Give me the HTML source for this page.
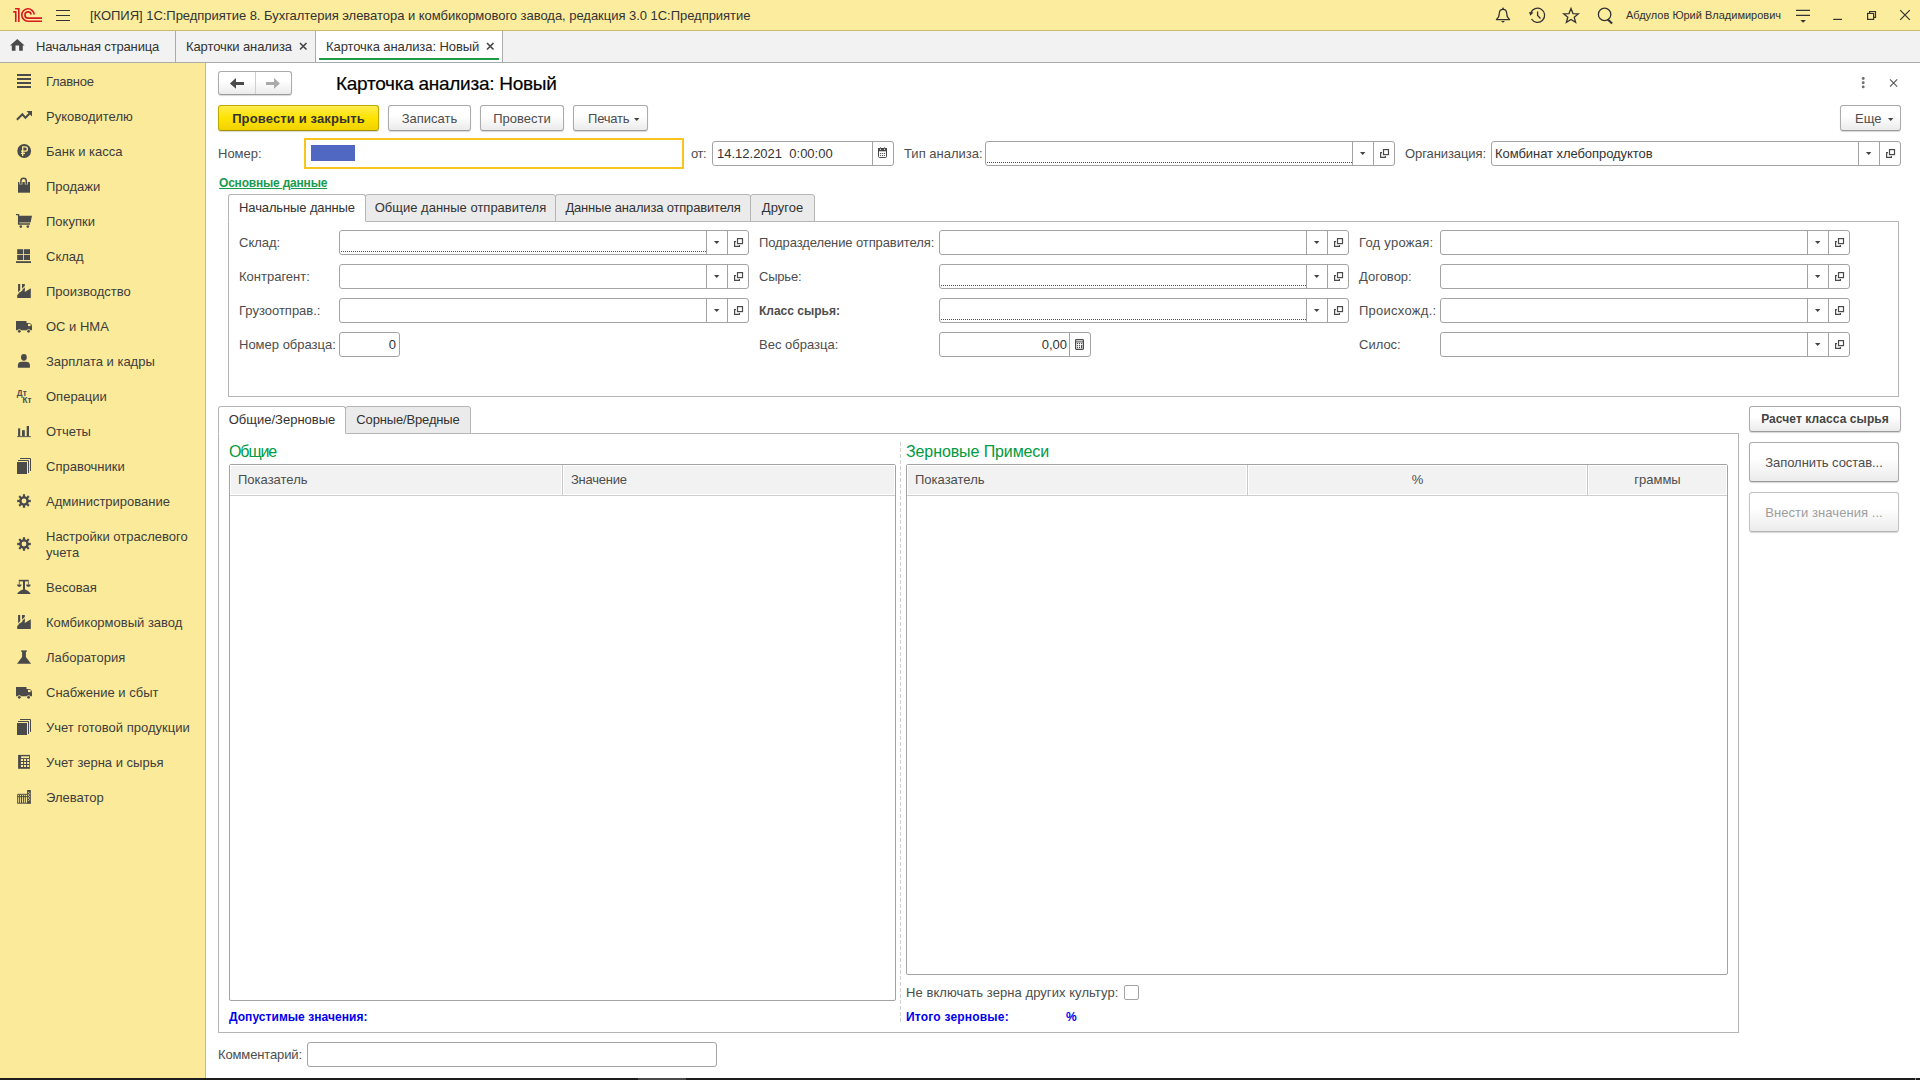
<!DOCTYPE html>
<html><head><meta charset="utf-8"><style>
*{box-sizing:border-box;margin:0;padding:0}
html,body{width:1920px;height:1080px;overflow:hidden}
body{position:relative;font-family:"Liberation Sans",sans-serif;font-size:13px;color:#4d4d4d;background:#fff}
.a{position:absolute}
.t{position:absolute;line-height:15px;white-space:nowrap}
.b12{font-size:12px;font-weight:bold;line-height:14px}
.sep{position:absolute;top:0;width:1px;height:31px;background:#C9C9C9}
.btn{position:absolute;height:26px;border:1px solid #ABABAB;border-bottom-color:#9A9A9A;border-radius:3px;background:linear-gradient(#FFFFFF 0%,#FFFFFF 40%,#EBEBEB 100%);box-shadow:0 1px 1px rgba(0,0,0,.16);color:#4d4d4d;text-align:center;line-height:24px;white-space:nowrap;padding-top:1px}
.fld{position:absolute;height:25px;border:1px solid #A3A3A3;border-radius:3px;background:#fff}
.dd{position:absolute;top:0;width:1px;height:23px;background:#A3A3A3}
.req{position:absolute;height:1px;background-image:linear-gradient(to right,#FF0000 50%,transparent 50%);background-size:2px 1px}
.lbl{position:absolute;line-height:15px;white-space:nowrap;color:#4d4d4d}
.ico{position:absolute;fill:#4A4A4A}
</style></head><body>
<div class="a" style="left:0;top:0;width:1920px;height:30px;background:#FBEC9E"></div>
<div class="a" style="left:0;top:30px;width:1920px;height:1px;background:#CDBB6A"></div>
<svg class="a" style="left:8px;top:4px" width="40" height="22" viewBox="0 0 40 22"><g fill="none" stroke="#D71920" stroke-width="1.6">
<path d="M5.2 7.9 H7.76 V18"/><path d="M7.1 4.8 H10.83 V18"/>
<path d="M26.18 10.46 A6.2 6.2 0 1 0 20 17.2 H34"/><path d="M23.07 10.57 A3.1 3.1 0 1 0 20 14.1 H34"/></g></svg>
<div class="a" style="left:56px;top:10px;width:14px;height:1.3px;background:#333;box-shadow:0 5px 0 #333,0 10px 0 #333"></div>
<div class="t" style="left:90px;top:8px;color:#333;letter-spacing:-0.033px">[КОПИЯ] 1С:Предприятие 8. Бухгалтерия элеватора и комбикормового завода, редакция 3.0 1С:Предприятие</div>
<svg class="a" style="left:1488px;top:2px" width="140" height="28" viewBox="0 0 140 28"><g fill="none" stroke="#333" stroke-width="1.3">
<path d="M8.4 17.6 L10.4 15.2 Q11.1 13.8 11.3 11.2 Q11.6 7.4 15 7.4 Q18.4 7.4 18.7 11.2 Q18.9 13.8 19.6 15.2 L21.6 17.6 Z" stroke-linejoin="round"/>
<path d="M43.5 17 A7.1 7.1 0 1 0 42.8 11"/><path d="M49.6 9.5 V13.5 L52.5 16.5"/>
<path d="M83 6.5 L85 11.6 L90.3 11.9 L86.2 15.2 L87.6 20.3 L83 17.4 L78.4 20.3 L79.8 15.2 L75.7 11.9 L81 11.6 Z"/>
<circle cx="116.6" cy="12.4" r="6.2"/></g>
<g fill="#333"><path d="M13 19 H17 L15 20.8 Z"/><circle cx="15" cy="6.3" r="0.9"/><path d="M41 10 L45.5 10.5 L42.3 13.8 Z"/><path d="M120.5 16.8 L124.8 20.8 L123.4 22.2 L119.1 18.2 Z"/></g></svg>
<div class="t" style="left:1626px;top:9px;font-size:11px;line-height:12px;color:#333">Абдулов Юрий Владимирович</div>
<svg class="a" style="left:1780px;top:2px" width="140" height="28" viewBox="0 0 140 28"><g fill="none" stroke="#333" stroke-width="1.2">
<path d="M16 8.4 H30 M16 13.3 H30"/><path d="M53.2 17.4 H62"/>
<rect x="87.6" y="11.4" width="6" height="6"/><path d="M89.6 11.4 V9.5 H95.5 V15.4 H93.6"/>
<path d="M120.2 8.2 L129.8 17.8 M129.8 8.2 L120.2 17.8"/></g>
<path d="M20.4 17.9 H25.9 L23.15 20.8 Z" fill="#333"/></svg>
<div class="a" style="left:0;top:31px;width:1920px;height:31px;background:#F2F2F2"></div>
<div class="a" style="left:0;top:62px;width:1920px;height:1px;background:#ABABAB"></div>
<svg class="a" style="left:10px;top:39px" width="15" height="12" viewBox="0 0 15 12"><path d="M7.3 0 L14.6 6.6 H12.8 V11.7 H9.1 V6.6 H5.5 V11.7 H1.8 V6.6 H0 Z" fill="#4A4A4A"/></svg>
<div class="t" style="left:36px;top:39px;color:#333;letter-spacing:-0.147px">Начальная страница</div>
<div class="a" style="left:175px;top:31px;width:1px;height:31px;background:#ABABAB"></div>
<div class="t" style="left:186px;top:39px;color:#333;letter-spacing:-0.097px">Карточки анализа</div>
<svg class="a" style="left:299px;top:42px" width="9" height="9" viewBox="0 0 9 9"><path d="M1 1 L7.5 7.5 M7.5 1 L1 7.5" stroke="#444" stroke-width="1.6"/></svg>
<div class="a" style="left:316px;top:31px;width:186px;height:31px;background:#FFFFFF"></div>
<div class="a" style="left:315px;top:31px;width:1px;height:31px;background:#ABABAB"></div>
<div class="t" style="left:326px;top:39px;color:#333;letter-spacing:-0.086px">Карточка анализа: Новый</div>
<svg class="a" style="left:486px;top:42px" width="9" height="9" viewBox="0 0 9 9"><path d="M1 1 L7.5 7.5 M7.5 1 L1 7.5" stroke="#444" stroke-width="1.6"/></svg>
<div class="a" style="left:319px;top:58px;width:180px;height:2px;background:#1E9B47"></div>
<div class="a" style="left:502px;top:31px;width:1px;height:31px;background:#ABABAB"></div>
<div class="a" style="left:0;top:63px;width:205px;height:1015px;background:#FBEA9A"></div>
<div class="a" style="left:205px;top:63px;width:1px;height:1015px;background:#C9BB80"></div>
<div class="t" style="left:46px;top:74px;color:#3d3d3d;letter-spacing:-0.292px">Главное</div>
<div class="t" style="left:46px;top:109px;color:#3d3d3d">Руководителю</div>
<div class="t" style="left:46px;top:144px;color:#3d3d3d">Банк и касса</div>
<div class="t" style="left:46px;top:179px;color:#3d3d3d">Продажи</div>
<div class="t" style="left:46px;top:214px;color:#3d3d3d">Покупки</div>
<div class="t" style="left:46px;top:249px;color:#3d3d3d">Склад</div>
<div class="t" style="left:46px;top:284px;color:#3d3d3d">Производство</div>
<div class="t" style="left:46px;top:319px;color:#3d3d3d">ОС и НМА</div>
<div class="t" style="left:46px;top:354px;color:#3d3d3d">Зарплата и кадры</div>
<div class="t" style="left:46px;top:389px;color:#3d3d3d">Операции</div>
<div class="t" style="left:46px;top:424px;color:#3d3d3d">Отчеты</div>
<div class="t" style="left:46px;top:459px;color:#3d3d3d">Справочники</div>
<div class="t" style="left:46px;top:494px;color:#3d3d3d">Администрирование</div>
<div class="t" style="left:46px;top:529px;color:#3d3d3d;line-height:16px">Настройки отраслевого<br>учета</div>
<div class="t" style="left:46px;top:580px;color:#3d3d3d">Весовая</div>
<div class="t" style="left:46px;top:615px;color:#3d3d3d">Комбикормовый завод</div>
<div class="t" style="left:46px;top:650px;color:#3d3d3d">Лаборатория</div>
<div class="t" style="left:46px;top:685px;color:#3d3d3d">Снабжение и сбыт</div>
<div class="t" style="left:46px;top:720px;color:#3d3d3d">Учет готовой продукции</div>
<div class="t" style="left:46px;top:755px;color:#3d3d3d">Учет зерна и сырья</div>
<div class="t" style="left:46px;top:790px;color:#3d3d3d">Элеватор</div>
<svg class="a" style="left:0;top:0" width="206" height="820" viewBox="0 0 206 820"><g fill="#4A4A4A"><rect x="17" y="74" width="14" height="2"/><rect x="17" y="78" width="14" height="2"/><rect x="17" y="82" width="14" height="2"/><rect x="17" y="86" width="14" height="2"/><path d="M16.9 119.8 L22.4 114.3 L25.4 117.8 L29.6 113.5" fill="none" stroke="#4A4A4A" stroke-width="2"/><path d="M26.5 110.9 H32 V116.4 Z"/><circle cx="24.2" cy="151" r="6.9"/><path d="M22.7 156 V146.8 H25.2 A2.2 2.2 0 0 1 25.2 151.2 H21 M21 153.4 H25" fill="none" stroke="#FBEA9A" stroke-width="1.3"/><rect x="18" y="182" width="12" height="10.7"/><path d="M20.9 184.5 V180.9 A2.7 2.7 0 0 1 26.3 180.9 V184.5" fill="none" stroke="#FBEA9A" stroke-width="3"/><path d="M20.9 184.5 V180.9 A2.7 2.7 0 0 1 26.3 180.9 V184.5" fill="none" stroke="#4A4A4A" stroke-width="1.5"/><path d="M16 214.6 H18.6 V224 H30" fill="none" stroke="#4A4A4A" stroke-width="1.3"/><path d="M18.3 215.8 H32 L30.6 222.6 H19 Z"/><circle cx="20.8" cy="226.6" r="1.3"/><circle cx="27.8" cy="226.6" r="1.3"/><rect x="17.2" y="249.2" width="6" height="5"/><rect x="24" y="249.2" width="6" height="5"/><rect x="17.2" y="255" width="6" height="5"/><rect x="24" y="255" width="6" height="5"/><rect x="16" y="261.2" width="15" height="1.8"/><path d="M17.2 295.1 L24.8 288.2 V291.9 L30.8 288.2 V297.9 H17.2 Z"/><rect x="18.1" y="284" width="2.1" height="9.5"/><rect x="22" y="284" width="2.8" height="6"/><path d="M16.5 294.3 L25.5 286.2" stroke="#FBEA9A" stroke-width="1.1"/><path d="M16 321 H26.5 V323 H29.5 Q32 323.5 32 326.5 V330.2 H16 Z"/><rect x="28" y="323.8" width="2.6" height="2.3" fill="#FBEA9A"/><circle cx="19.3" cy="331.3" r="2.1" fill="#FBEA9A"/><circle cx="28.6" cy="331.3" r="2.1" fill="#FBEA9A"/><circle cx="19.3" cy="331.3" r="1.4"/><circle cx="28.6" cy="331.3" r="1.4"/><ellipse cx="23.9" cy="357.3" rx="2.9" ry="3.4"/><path d="M17.9 367.8 V365.2 Q17.9 361.8 22 361.8 H25.8 Q29.9 361.8 29.9 365.2 V367.8 Z"/><text x="16.8" y="395.6" font-family="Liberation Sans" font-weight="bold" font-size="8.2" fill="#4A4A4A">Дт</text><text x="22.6" y="403.2" font-family="Liberation Sans" font-weight="bold" font-size="8.2" fill="#4A4A4A">Кт</text><rect x="18.1" y="428.4" width="2.1" height="7.8"/><rect x="22" y="430.2" width="2.8" height="6"/><rect x="26.7" y="426" width="2.3" height="10.2"/><rect x="17.2" y="436.2" width="13.6" height="0.9"/><rect x="17" y="462" width="10" height="12"/><path d="M18 460.5 H28.5 V473 M20 458.5 H30.5 V471" fill="none" stroke="#4A4A4A" stroke-width="1"/><path fill-rule="evenodd" d="M28.53 499.13 L28.79 499.98 L30.80 499.85 L30.80 502.15 L28.79 502.02 L28.53 502.88 L28.11 503.67 L29.63 504.99 L27.99 506.63 L26.67 505.11 L25.87 505.53 L25.02 505.79 L25.15 507.80 L22.85 507.80 L22.98 505.79 L22.12 505.53 L21.33 505.11 L20.01 506.63 L18.37 504.99 L19.89 503.67 L19.47 502.87 L19.21 502.02 L17.20 502.15 L17.20 499.85 L19.21 499.98 L19.47 499.12 L19.89 498.33 L18.37 497.01 L20.01 495.37 L21.33 496.89 L22.13 496.47 L22.98 496.21 L22.85 494.20 L25.15 494.20 L25.02 496.21 L25.88 496.47 L26.67 496.89 L27.99 495.37 L29.63 497.01 L28.11 498.33 Z M26.40 501.00 A2.4 2.4 0 1 0 21.60 501.00 A2.4 2.4 0 1 0 26.40 501.00 Z"/><path fill-rule="evenodd" d="M28.53 542.13 L28.79 542.98 L30.80 542.85 L30.80 545.15 L28.79 545.02 L28.53 545.88 L28.11 546.67 L29.63 547.99 L27.99 549.63 L26.67 548.11 L25.87 548.53 L25.02 548.79 L25.15 550.80 L22.85 550.80 L22.98 548.79 L22.12 548.53 L21.33 548.11 L20.01 549.63 L18.37 547.99 L19.89 546.67 L19.47 545.87 L19.21 545.02 L17.20 545.15 L17.20 542.85 L19.21 542.98 L19.47 542.12 L19.89 541.33 L18.37 540.01 L20.01 538.37 L21.33 539.89 L22.13 539.47 L22.98 539.21 L22.85 537.20 L25.15 537.20 L25.02 539.21 L25.88 539.47 L26.67 539.89 L27.99 538.37 L29.63 540.01 L28.11 541.33 Z M26.40 544.00 A2.4 2.4 0 1 0 21.60 544.00 A2.4 2.4 0 1 0 26.40 544.00 Z"/><rect x="18.8" y="579.8" width="9.9" height="1.6"/><rect x="23" y="581" width="2" height="10"/><path d="M17 584.6 H21.6 A2.3 2.3 0 0 1 17 584.6 Z M26.1 584.6 H30.7 A2.3 2.3 0 0 1 26.1 584.6 Z"/><path d="M19.3 584.6 L19.3 581.4 M28.4 584.6 L28.4 581.4" stroke="#4A4A4A" stroke-width="0.8"/><path d="M17 594 Q20 589.5 24 589.5 Q28 589.5 30.7 594 Z"/><path d="M17.2 626.1 L24.8 619.2 V622.9 L30.8 619.2 V628.9 H17.2 Z"/><rect x="18.1" y="615" width="2.1" height="9.5"/><rect x="22" y="615" width="2.8" height="6"/><path d="M16.5 625.3 L25.5 617.2" stroke="#FBEA9A" stroke-width="1.1"/><rect x="21.3" y="650.4" width="5.4" height="1.6"/><path d="M22.1 651.5 H25.9 V657 L31.1 663.8 H17 L22.1 657 Z"/><path d="M16 687 H26.5 V689 H29.5 Q32 689.5 32 692.5 V696.2 H16 Z"/><rect x="28" y="689.8" width="2.6" height="2.3" fill="#FBEA9A"/><circle cx="19.3" cy="697.3" r="2.1" fill="#FBEA9A"/><circle cx="28.6" cy="697.3" r="2.1" fill="#FBEA9A"/><circle cx="19.3" cy="697.3" r="1.4"/><circle cx="28.6" cy="697.3" r="1.4"/><rect x="17" y="723" width="10" height="12"/><path d="M18 721.5 H28.5 V734 M20 719.5 H30.5 V732" fill="none" stroke="#4A4A4A" stroke-width="1"/><rect x="18.1" y="754.9" width="11.8" height="13.9"/><g fill="#FBEA9A"><rect x="21.1" y="756.3" width="7.9" height="1.8"/><rect x="20.9" y="759" width="2.1" height="2"/><rect x="23.9" y="759" width="2.1" height="2"/><rect x="27.1" y="759" width="2.1" height="2"/><rect x="20.9" y="762" width="2.1" height="2"/><rect x="23.9" y="762" width="2.1" height="2"/><rect x="27.1" y="762" width="2.1" height="2"/><rect x="20.9" y="765" width="2.1" height="2"/><rect x="23.9" y="765" width="2.1" height="2"/><rect x="27.1" y="765" width="2.1" height="2"/></g><path d="M17.7 803 V794.3 H27.1 M19.6 795 V803 M21.5 795 V803 M23.4 795 V803 M25.3 795 V803 M17.7 796.7 H27.1 M17.2 803.2 H30.8" fill="none" stroke="#4A4A4A" stroke-width="1"/><rect x="27.1" y="790" width="3.7" height="13.5"/><path d="M28 792 L29.8 793.5 L28 795 L29.8 796.5 L28 798 L29.8 799.5 L28 801" fill="none" stroke="#FBEA9A" stroke-width="0.7"/></g></svg>
<div class="btn" style="left:218px;top:71px;width:74px;height:24px"></div>
<div class="a" style="left:255px;top:72px;width:1px;height:22px;background:#CFCFCF"></div>
<svg class="a" style="left:229px;top:77px" width="16" height="12" viewBox="0 0 16 12"><path d="M0.9 6.4 L7 1.1 V4.9 H15 V7.9 H7 V11.8 Z" fill="#4A4A4A"/></svg>
<svg class="a" style="left:265px;top:77px" width="16" height="12" viewBox="0 0 16 12"><path d="M14.9 6.4 L9 1.1 V4.9 H1 V7.9 H9 V11.8 Z" fill="#AAAAAA"/></svg>
<div class="t" style="left:336px;top:73px;font-size:19px;line-height:21px;color:#000;letter-spacing:-0.27px;-webkit-text-stroke:0.2px #000">Карточка анализа: Новый</div>
<svg class="a" style="left:1860px;top:76px" width="6" height="14" viewBox="0 0 6 14"><g fill="#707070"><circle cx="3.2" cy="2.5" r="1.45"/><circle cx="3.2" cy="6.7" r="1.45"/><circle cx="3.2" cy="10.9" r="1.45"/></g></svg>
<svg class="a" style="left:1888px;top:77px" width="11" height="11" viewBox="0 0 11 11"><path d="M2 2.4 L9.2 9.6 M9.2 2.4 L2 9.6" stroke="#555" stroke-width="1.1"/></svg>
<div class="btn" style="left:218px;top:105px;width:161px;height:26px;line-height:24px;background:linear-gradient(#FFEC50,#FFE300 50%,#F0D200);border-color:#BFA600;border-bottom-color:#A99200;color:#333;font-weight:bold;letter-spacing:0.132px">Провести и закрыть</div>
<div class="btn" style="left:388px;top:105px;width:83px;height:26px;line-height:24px;">Записать</div>
<div class="btn" style="left:480px;top:105px;width:84px;height:26px;line-height:24px;">Провести</div>
<div class="btn" style="left:573px;top:105px;width:75px;height:26px;line-height:24px;text-align:left;padding-left:14px;letter-spacing:-0.2px">Печать<svg style="display:inline-block;vertical-align:middle;margin-left:5px;margin-top:0px" width="6" height="4" viewBox="0 0 6 4"><path d="M0 0 H5.4 L2.7 3 Z" fill="#444"/></svg></div>
<div class="btn" style="left:1840px;top:105px;width:61px;height:26px;line-height:24px;text-align:left;padding-left:14px;">Еще<svg style="display:inline-block;vertical-align:middle;margin-left:7px;margin-top:0px" width="6" height="4" viewBox="0 0 6 4"><path d="M0 0 H5.4 L2.7 3 Z" fill="#444"/></svg></div>
<div class="lbl" style="left:218px;top:146px;">Номер:</div>
<div class="a" style="left:304px;top:138px;width:380px;height:31px;border:2px solid #F8C41E;background:#fff"></div>
<div class="a" style="left:311px;top:145px;width:44px;height:16px;background:#5068C2"></div>
<div class="lbl" style="left:691px;top:146px;;letter-spacing:-0.400px">от:</div>
<div class="fld" style="left:712px;top:141px;width:182px"><div class="dd" style="left:159px"></div><div class="t" style="left:4px;top:4px;color:#333">14.12.2021&nbsp; 0:00:00</div><svg class="a" style="left:164px;top:5px" width="11" height="12" viewBox="0 0 11 12"><rect x="1.5" y="1.5" width="8" height="9" rx="1" fill="none" stroke="#4A4A4A" stroke-width="1"/><rect x="1" y="1" width="9" height="3.3" fill="#4A4A4A"/><g fill="#fff"><rect x="3" y="1.6" width="1" height="1.2"/><rect x="7" y="1.6" width="1" height="1.2"/></g><g fill="#4A4A4A"><circle cx="3.5" cy="0.9" r="0.7"/><circle cx="7.5" cy="0.9" r="0.7"/><rect x="2.9" y="5.9" width="1.2" height="1.2" rx="0.4"/><rect x="4.9" y="5.9" width="1.2" height="1.2" rx="0.4"/><rect x="6.9" y="5.9" width="1.2" height="1.2" rx="0.4"/><rect x="2.9" y="7.9" width="1.2" height="1.2" rx="0.4"/><rect x="4.9" y="7.9" width="1.2" height="1.2" rx="0.4"/><rect x="6.9" y="7.9" width="1.2" height="1.2" rx="0.4"/></g></svg></div>
<div class="lbl" style="left:904px;top:146px;">Тип анализа:</div>
<div class="fld" style="left:985px;top:141px;width:410px"><div class="dd" style="left:366px"></div><div class="dd" style="left:387px"></div><svg class="a" style="left:374.3px;top:10px" width="6" height="4" viewBox="0 0 6 4"><path d="M0 0 H5.4 L2.7 3 Z" fill="#444"/></svg><svg class="a" style="left:393px;top:7px" width="11" height="10" viewBox="0 0 11 10"><g fill="none" stroke="#4A4A4A" stroke-width="1.2"><rect x="4.5" y="0.6" width="5" height="5"/><path d="M3 3.6 H1.6 V8.4 H6.4 V7"/></g></svg><div class="req" style="left:1px;top:20px;width:365px"></div></div>
<div class="lbl" style="left:1405px;top:146px;;letter-spacing:-0.091px">Организация:</div>
<div class="fld" style="left:1491px;top:141px;width:410px"><div class="dd" style="left:366px"></div><div class="dd" style="left:387px"></div><svg class="a" style="left:374.3px;top:10px" width="6" height="4" viewBox="0 0 6 4"><path d="M0 0 H5.4 L2.7 3 Z" fill="#444"/></svg><svg class="a" style="left:393px;top:7px" width="11" height="10" viewBox="0 0 11 10"><g fill="none" stroke="#4A4A4A" stroke-width="1.2"><rect x="4.5" y="0.6" width="5" height="5"/><path d="M3 3.6 H1.6 V8.4 H6.4 V7"/></g></svg><div class="t" style="left:3px;top:4px;color:#333;letter-spacing:-0.057px">Комбинат хлебопродуктов</div></div>
<div class="t b12" style="left:219px;top:176px;color:#1A9A50;text-decoration:underline;letter-spacing:-0.2px">Основные данные</div>
<div class="a" style="left:228px;top:221px;width:1671px;height:176px;border:1px solid #B5B5B5;border-top-color:#B5B5B5"></div>
<div class="a" style="left:365px;top:194px;width:191px;height:28px;background:#EBEBEB;border:1px solid #B5B5B5;border-radius:3px 3px 0 0"></div>
<div class="t" style="left:365px;width:191px;text-align:center;top:200px;color:#333">Общие данные отправителя</div>
<div class="a" style="left:555px;top:194px;width:196px;height:28px;background:#EBEBEB;border:1px solid #B5B5B5;border-radius:3px 3px 0 0"></div>
<div class="t" style="left:555px;width:196px;text-align:center;top:200px;color:#333;letter-spacing:-0.170px">Данные анализа отправителя</div>
<div class="a" style="left:750px;top:194px;width:65px;height:28px;background:#EBEBEB;border:1px solid #B5B5B5;border-radius:3px 3px 0 0"></div>
<div class="t" style="left:750px;width:65px;text-align:center;top:200px;color:#333">Другое</div>
<div class="a" style="left:228px;top:194px;width:138px;height:28px;background:#fff;border:1px solid #B5B5B5;border-bottom:1px solid #fff;border-radius:3px 3px 0 0"></div>
<div class="t" style="left:228px;width:138px;text-align:center;top:200px;color:#333;letter-spacing:-0.120px">Начальные данные</div>
<div class="lbl" style="left:239px;top:235px;">Склад:</div>
<div class="lbl" style="left:759px;top:235px;;letter-spacing:-0.100px">Подразделение отправителя:</div>
<div class="lbl" style="left:1359px;top:235px;;letter-spacing:0.250px">Год урожая:</div>
<div class="lbl" style="left:239px;top:269px;">Контрагент:</div>
<div class="lbl" style="left:759px;top:269px;;letter-spacing:-0.200px">Сырье:</div>
<div class="lbl" style="left:1359px;top:269px;">Договор:</div>
<div class="lbl" style="left:239px;top:303px;">Грузоотправ.:</div>
<div class="lbl" style="left:759px;top:303px;"><b style="font-size:12px">Класс сырья:</b></div>
<div class="lbl" style="left:1359px;top:303px;;letter-spacing:0.260px">Происхожд.:</div>
<div class="lbl" style="left:239px;top:337px;">Номер образца:</div>
<div class="lbl" style="left:759px;top:337px;">Вес образца:</div>
<div class="lbl" style="left:1359px;top:337px;">Силос:</div>
<div class="fld" style="left:339px;top:230px;width:410px"><div class="dd" style="left:366px"></div><div class="dd" style="left:387px"></div><svg class="a" style="left:374.3px;top:10px" width="6" height="4" viewBox="0 0 6 4"><path d="M0 0 H5.4 L2.7 3 Z" fill="#444"/></svg><svg class="a" style="left:393px;top:7px" width="11" height="10" viewBox="0 0 11 10"><g fill="none" stroke="#4A4A4A" stroke-width="1.2"><rect x="4.5" y="0.6" width="5" height="5"/><path d="M3 3.6 H1.6 V8.4 H6.4 V7"/></g></svg><div class="req" style="left:1px;top:20px;width:365px"></div></div>
<div class="fld" style="left:939px;top:230px;width:410px"><div class="dd" style="left:366px"></div><div class="dd" style="left:387px"></div><svg class="a" style="left:374.3px;top:10px" width="6" height="4" viewBox="0 0 6 4"><path d="M0 0 H5.4 L2.7 3 Z" fill="#444"/></svg><svg class="a" style="left:393px;top:7px" width="11" height="10" viewBox="0 0 11 10"><g fill="none" stroke="#4A4A4A" stroke-width="1.2"><rect x="4.5" y="0.6" width="5" height="5"/><path d="M3 3.6 H1.6 V8.4 H6.4 V7"/></g></svg></div>
<div class="fld" style="left:339px;top:264px;width:410px"><div class="dd" style="left:366px"></div><div class="dd" style="left:387px"></div><svg class="a" style="left:374.3px;top:10px" width="6" height="4" viewBox="0 0 6 4"><path d="M0 0 H5.4 L2.7 3 Z" fill="#444"/></svg><svg class="a" style="left:393px;top:7px" width="11" height="10" viewBox="0 0 11 10"><g fill="none" stroke="#4A4A4A" stroke-width="1.2"><rect x="4.5" y="0.6" width="5" height="5"/><path d="M3 3.6 H1.6 V8.4 H6.4 V7"/></g></svg></div>
<div class="fld" style="left:939px;top:264px;width:410px"><div class="dd" style="left:366px"></div><div class="dd" style="left:387px"></div><svg class="a" style="left:374.3px;top:10px" width="6" height="4" viewBox="0 0 6 4"><path d="M0 0 H5.4 L2.7 3 Z" fill="#444"/></svg><svg class="a" style="left:393px;top:7px" width="11" height="10" viewBox="0 0 11 10"><g fill="none" stroke="#4A4A4A" stroke-width="1.2"><rect x="4.5" y="0.6" width="5" height="5"/><path d="M3 3.6 H1.6 V8.4 H6.4 V7"/></g></svg><div class="req" style="left:1px;top:20px;width:365px"></div></div>
<div class="fld" style="left:339px;top:298px;width:410px"><div class="dd" style="left:366px"></div><div class="dd" style="left:387px"></div><svg class="a" style="left:374.3px;top:10px" width="6" height="4" viewBox="0 0 6 4"><path d="M0 0 H5.4 L2.7 3 Z" fill="#444"/></svg><svg class="a" style="left:393px;top:7px" width="11" height="10" viewBox="0 0 11 10"><g fill="none" stroke="#4A4A4A" stroke-width="1.2"><rect x="4.5" y="0.6" width="5" height="5"/><path d="M3 3.6 H1.6 V8.4 H6.4 V7"/></g></svg></div>
<div class="fld" style="left:939px;top:298px;width:410px"><div class="dd" style="left:366px"></div><div class="dd" style="left:387px"></div><svg class="a" style="left:374.3px;top:10px" width="6" height="4" viewBox="0 0 6 4"><path d="M0 0 H5.4 L2.7 3 Z" fill="#444"/></svg><svg class="a" style="left:393px;top:7px" width="11" height="10" viewBox="0 0 11 10"><g fill="none" stroke="#4A4A4A" stroke-width="1.2"><rect x="4.5" y="0.6" width="5" height="5"/><path d="M3 3.6 H1.6 V8.4 H6.4 V7"/></g></svg><div class="req" style="left:1px;top:20px;width:365px"></div></div>
<div class="fld" style="left:1440px;top:230px;width:410px"><div class="dd" style="left:366px"></div><div class="dd" style="left:387px"></div><svg class="a" style="left:374.3px;top:10px" width="6" height="4" viewBox="0 0 6 4"><path d="M0 0 H5.4 L2.7 3 Z" fill="#444"/></svg><svg class="a" style="left:393px;top:7px" width="11" height="10" viewBox="0 0 11 10"><g fill="none" stroke="#4A4A4A" stroke-width="1.2"><rect x="4.5" y="0.6" width="5" height="5"/><path d="M3 3.6 H1.6 V8.4 H6.4 V7"/></g></svg></div>
<div class="fld" style="left:1440px;top:264px;width:410px"><div class="dd" style="left:366px"></div><div class="dd" style="left:387px"></div><svg class="a" style="left:374.3px;top:10px" width="6" height="4" viewBox="0 0 6 4"><path d="M0 0 H5.4 L2.7 3 Z" fill="#444"/></svg><svg class="a" style="left:393px;top:7px" width="11" height="10" viewBox="0 0 11 10"><g fill="none" stroke="#4A4A4A" stroke-width="1.2"><rect x="4.5" y="0.6" width="5" height="5"/><path d="M3 3.6 H1.6 V8.4 H6.4 V7"/></g></svg></div>
<div class="fld" style="left:1440px;top:298px;width:410px"><div class="dd" style="left:366px"></div><div class="dd" style="left:387px"></div><svg class="a" style="left:374.3px;top:10px" width="6" height="4" viewBox="0 0 6 4"><path d="M0 0 H5.4 L2.7 3 Z" fill="#444"/></svg><svg class="a" style="left:393px;top:7px" width="11" height="10" viewBox="0 0 11 10"><g fill="none" stroke="#4A4A4A" stroke-width="1.2"><rect x="4.5" y="0.6" width="5" height="5"/><path d="M3 3.6 H1.6 V8.4 H6.4 V7"/></g></svg></div>
<div class="fld" style="left:1440px;top:332px;width:410px"><div class="dd" style="left:366px"></div><div class="dd" style="left:387px"></div><svg class="a" style="left:374.3px;top:10px" width="6" height="4" viewBox="0 0 6 4"><path d="M0 0 H5.4 L2.7 3 Z" fill="#444"/></svg><svg class="a" style="left:393px;top:7px" width="11" height="10" viewBox="0 0 11 10"><g fill="none" stroke="#4A4A4A" stroke-width="1.2"><rect x="4.5" y="0.6" width="5" height="5"/><path d="M3 3.6 H1.6 V8.4 H6.4 V7"/></g></svg></div>
<div class="fld" style="left:339px;top:332px;width:61px"><div class="t" style="right:3px;top:4px;color:#333">0</div></div>
<div class="fld" style="left:939px;top:332px;width:152px"><div class="dd" style="left:129px"></div><div class="t" style="right:23px;top:4px;color:#333">0,00</div><svg class="a" style="left:135px;top:6px" width="9" height="11" viewBox="0 0 9 11"><rect x="0.6" y="0.6" width="7.8" height="9.8" rx="0.8" fill="none" stroke="#4A4A4A" stroke-width="1.2"/><path d="M0.6 2.9 H8.4" stroke="#4A4A4A" stroke-width="1"/><g fill="#4A4A4A"><circle cx="2.5" cy="4.4" r="0.65"/><circle cx="4.5" cy="4.4" r="0.65"/><circle cx="6.6" cy="4.4" r="0.65"/><circle cx="2.5" cy="6.5" r="0.65"/><circle cx="4.5" cy="6.5" r="0.65"/><circle cx="2.5" cy="8.5" r="0.65"/><circle cx="4.5" cy="8.5" r="0.65"/><rect x="6" y="5.8" width="1.2" height="3.4" rx="0.5"/></g></svg></div>
<div class="a" style="left:218px;top:433px;width:1521px;height:600px;border:1px solid #B5B5B5"></div>
<div class="a" style="left:345px;top:406px;width:126px;height:28px;background:#EBEBEB;border:1px solid #B5B5B5;border-radius:3px 3px 0 0"></div>
<div class="t" style="left:345px;width:126px;text-align:center;top:412px;color:#333;letter-spacing:-0.150px">Сорные/Вредные</div>
<div class="a" style="left:218px;top:406px;width:128px;height:28px;background:#fff;border:1px solid #B5B5B5;border-bottom:1px solid #fff;border-radius:3px 3px 0 0"></div>
<div class="t" style="left:218px;width:128px;text-align:center;top:412px;color:#333">Общие/Зерновые</div>
<div class="btn" style="left:1749px;top:406px;width:152px;height:26px;line-height:23px;font-size:12px;font-weight:bold;color:#444;letter-spacing:0.083px">Расчет класса сырья</div>
<div class="btn" style="left:1749px;top:442px;width:150px;height:40px;line-height:38px;;letter-spacing:-0.061px">Заполнить состав...</div>
<div class="btn" style="left:1749px;top:492px;width:150px;height:40px;line-height:38px;color:#9E9E9E;border-color:#C4C4C4;border-bottom-color:#B5B5B5;letter-spacing:0.056px">Внести значения ...</div>
<div class="t" style="left:229px;top:442px;font-size:16px;line-height:19px;color:#009A40;letter-spacing:-1.1px">Общие</div>
<div class="t" style="left:906px;top:442px;font-size:16px;line-height:19px;color:#009A40;letter-spacing:-0.1px">Зерновые Примеси</div>
<div class="a" style="left:900px;top:442px;width:1px;height:582px;background:repeating-linear-gradient(#D2D2D2 0 4px,transparent 4px 6px)"></div>
<div class="a" style="left:229px;top:464px;width:667px;height:537px;border:1px solid #A3A3A3;border-radius:2px;background:#fff"></div>
<div class="a" style="left:230px;top:495px;width:665px;height:1px;background:#CDCDCD"></div>
<div class="a" style="left:230px;top:465px;width:332px;height:30px;border:1px solid #fff;background:#F2F2F2"></div>
<div class="a" style="left:563px;top:465px;width:332px;height:30px;border:1px solid #fff;background:#F2F2F2"></div>
<div class="a" style="left:562px;top:465px;width:1px;height:30px;background:#C8C8C8"></div>
<div class="t" style="left:238px;top:472px;color:#4d4d4d">Показатель</div>
<div class="t" style="left:571px;top:472px;color:#4d4d4d;letter-spacing:-0.250px">Значение</div>
<div class="a" style="left:906px;top:464px;width:822px;height:511px;border:1px solid #A3A3A3;border-radius:2px;background:#fff"></div>
<div class="a" style="left:907px;top:495px;width:820px;height:1px;background:#CDCDCD"></div>
<div class="a" style="left:907px;top:465px;width:340px;height:30px;border:1px solid #fff;background:#F2F2F2"></div>
<div class="a" style="left:1248px;top:465px;width:339px;height:30px;border:1px solid #fff;background:#F2F2F2"></div>
<div class="a" style="left:1588px;top:465px;width:139px;height:30px;border:1px solid #fff;background:#F2F2F2"></div>
<div class="a" style="left:1247px;top:465px;width:1px;height:30px;background:#C8C8C8"></div>
<div class="a" style="left:1587px;top:465px;width:1px;height:30px;background:#C8C8C8"></div>
<div class="t" style="left:915px;top:472px;color:#4d4d4d">Показатель</div>
<div class="t" style="left:1248px;width:339px;text-align:center;top:472px;color:#4d4d4d">%</div>
<div class="t" style="left:1588px;width:139px;text-align:center;top:472px;color:#4d4d4d">граммы</div>
<div class="lbl" style="left:906px;top:985px;;letter-spacing:0.062px">Не включать зерна других культур:</div>
<div class="a" style="left:1124px;top:985px;width:15px;height:15px;border:1px solid #A3A3A3;border-radius:2px;background:#fff"></div>
<div class="t b12" style="left:229px;top:1010px;color:#0000F0;letter-spacing:0.047px">Допустимые значения:</div>
<div class="t b12" style="left:906px;top:1010px;color:#0000F0;letter-spacing:0.2px">Итого зерновые:</div>
<div class="t b12" style="left:1066px;top:1010px;color:#0000F0">%</div>
<div class="lbl" style="left:218px;top:1047px;;letter-spacing:-0.127px">Комментарий:</div>
<div class="fld" style="left:307px;top:1042px;width:410px"></div>
<div class="a" style="left:0;top:1078px;width:1920px;height:2px;background:#1C1C1C"></div>
<div class="a" style="left:638px;top:1078px;width:48px;height:2px;background:#4A4A4A"></div>
<div class="a" style="left:1915px;top:1078px;width:1px;height:2px;background:#8A8A8A"></div>
</body></html>
